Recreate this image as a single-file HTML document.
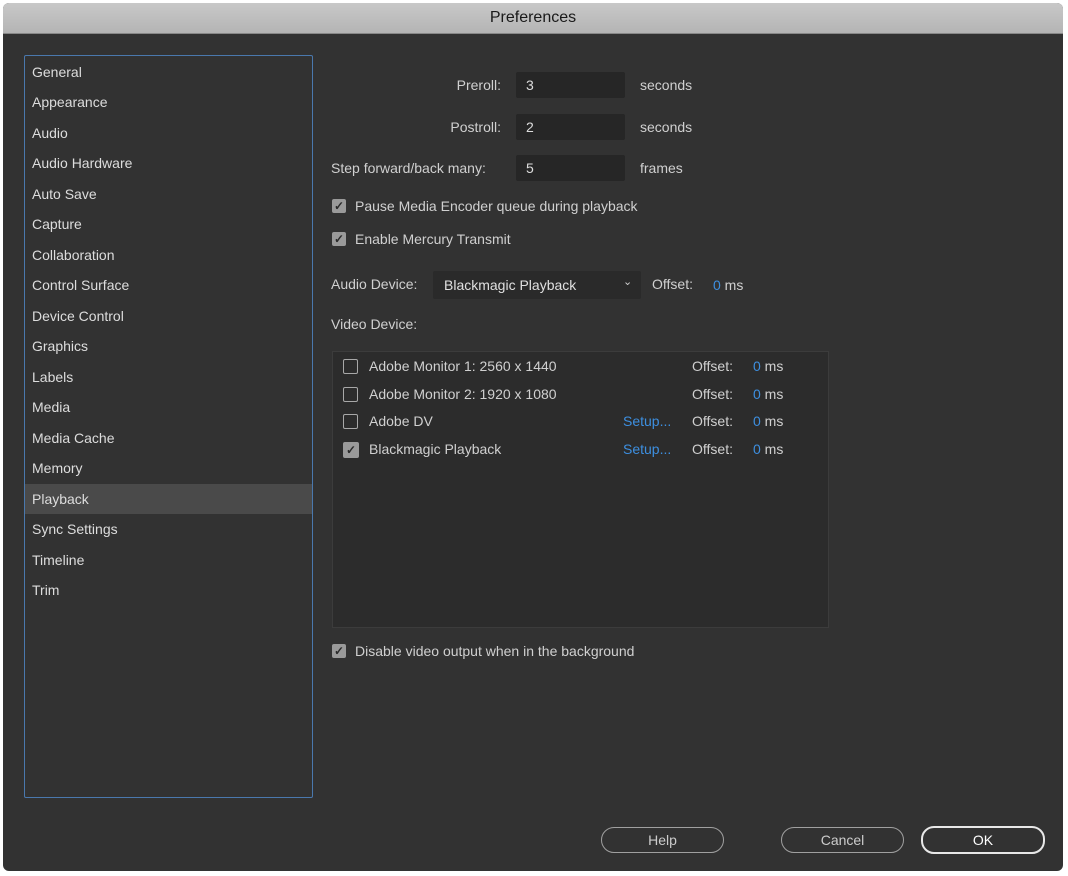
<!DOCTYPE html><html><head><style>
body{margin:0;width:1068px;height:876px;background:#fff;font-family:"Liberation Sans",sans-serif;font-size:14px;color:#d0d0d0;position:relative;overflow:hidden}
.win{position:absolute;left:3px;top:3px;width:1060px;height:868px;background:#323232;border-radius:6px;overflow:hidden}
.title{position:absolute;left:0;top:0;width:100%;height:30px;background:linear-gradient(#c8c8c8,#b4b4b4);border-bottom:1px solid #888;color:#1a1a1a;text-align:center;line-height:30px;font-size:16px}
.a{position:absolute;white-space:nowrap}
.side{position:absolute;left:21px;top:52px;width:287px;height:741px;border:1px solid #4a78ad;border-radius:2px}
.it{position:absolute;left:7px;font-size:14px;color:#ddd}
.inp{position:absolute;background:#262626;width:109px;height:26px;border-radius:2px;color:#ddd;line-height:26px;text-indent:10px}
.cb{position:absolute;width:14px;height:14px;background:#9a9a9a;border-radius:2px;color:#2a2a2a;font-size:12px;font-weight:bold;line-height:14px;text-align:center}
.cbo{position:absolute;width:13px;height:13px;border:1.5px solid #a8a8a8;border-radius:2px}
.blue{color:#3d8fe0}
.btn{position:absolute;top:824px;height:24px;border:1.5px solid #a0a0a0;border-radius:13px;text-align:center;line-height:24px;color:#ccc}
</style></head><body><div class="win">
<div class="title">Preferences</div>
<div class="side">
<div style="position:absolute;left:0;top:428px;width:287px;height:30px;background:#4a4a4a"></div>
<div class="it" style="top:8px">General</div><div class="it" style="top:38px">Appearance</div><div class="it" style="top:69px">Audio</div><div class="it" style="top:99px">Audio Hardware</div><div class="it" style="top:130px">Auto Save</div><div class="it" style="top:160px">Capture</div><div class="it" style="top:191px">Collaboration</div><div class="it" style="top:221px">Control Surface</div><div class="it" style="top:252px">Device Control</div><div class="it" style="top:282px">Graphics</div><div class="it" style="top:313px">Labels</div><div class="it" style="top:343px">Media</div><div class="it" style="top:374px">Media Cache</div><div class="it" style="top:404px">Memory</div><div class="it" style="top:435px">Playback</div><div class="it" style="top:465px">Sync Settings</div><div class="it" style="top:496px">Timeline</div><div class="it" style="top:526px">Trim</div>
</div>
<div class="a" style="right:562px;top:74px">Preroll:</div><div class="inp" style="left:513px;top:69px">3</div><div class="a" style="left:637px;top:74px">seconds</div>
<div class="a" style="right:562px;top:116px">Postroll:</div><div class="inp" style="left:513px;top:111px">2</div><div class="a" style="left:637px;top:116px">seconds</div>
<div class="a" style="left:328px;top:157px">Step forward/back many:</div><div class="inp" style="left:513px;top:152px">5</div><div class="a" style="left:637px;top:157px">frames</div>
<div class="cb" style="left:329px;top:196px">✓</div><div class="a" style="left:352px;top:195px">Pause Media Encoder queue during playback</div>
<div class="cb" style="left:329px;top:229px">✓</div><div class="a" style="left:352px;top:228px">Enable Mercury Transmit</div>
<div class="a" style="left:328px;top:273px">Audio Device:</div>
<div style="position:absolute;left:430px;top:268px;width:208px;height:28px;background:#2a2a2a;border-radius:2px"></div>
<div class="a" style="left:441px;top:274px;color:#e0e0e0">Blackmagic Playback</div><div class="a" style="left:620px;top:272px;font-size:11px">⌄</div>
<div class="a" style="left:649px;top:273px">Offset:</div><div class="a" style="left:710px;top:274px"><span class="blue">0</span> ms</div>
<div class="a" style="left:328px;top:313px">Video Device:</div>
<div style="position:absolute;left:329px;top:348px;width:495px;height:275px;background:#2c2c2c;border:1px solid #3c3c3c"></div>
<div class="cbo" style="left:340px;top:356px"></div><div class="a" style="left:366px;top:355px">Adobe Monitor 1: 2560 x 1440</div><div class="a" style="left:689px;top:355px">Offset:</div><div class="a" style="left:750px;top:355px"><span class="blue">0</span> ms</div>
<div class="cbo" style="left:340px;top:384px"></div><div class="a" style="left:366px;top:383px">Adobe Monitor 2: 1920 x 1080</div><div class="a" style="left:689px;top:383px">Offset:</div><div class="a" style="left:750px;top:383px"><span class="blue">0</span> ms</div>
<div class="cbo" style="left:340px;top:411px"></div><div class="a" style="left:366px;top:410px">Adobe DV</div><div class="a blue" style="left:620px;top:410px">Setup...</div><div class="a" style="left:689px;top:410px">Offset:</div><div class="a" style="left:750px;top:410px"><span class="blue">0</span> ms</div>
<div class="cb" style="left:340px;top:439px;width:16px;height:16px;line-height:16px">✓</div><div class="a" style="left:366px;top:438px">Blackmagic Playback</div><div class="a blue" style="left:620px;top:438px">Setup...</div><div class="a" style="left:689px;top:438px">Offset:</div><div class="a" style="left:750px;top:438px"><span class="blue">0</span> ms</div>
<div class="cb" style="left:329px;top:641px">✓</div><div class="a" style="left:352px;top:640px">Disable video output when in the background</div>
<div class="btn" style="left:598px;width:121px">Help</div>
<div class="btn" style="left:778px;width:121px">Cancel</div>
<div class="btn" style="left:918px;width:120px;border:2px solid #e8e8e8;color:#fff;top:823px">OK</div>
</div></body></html>
